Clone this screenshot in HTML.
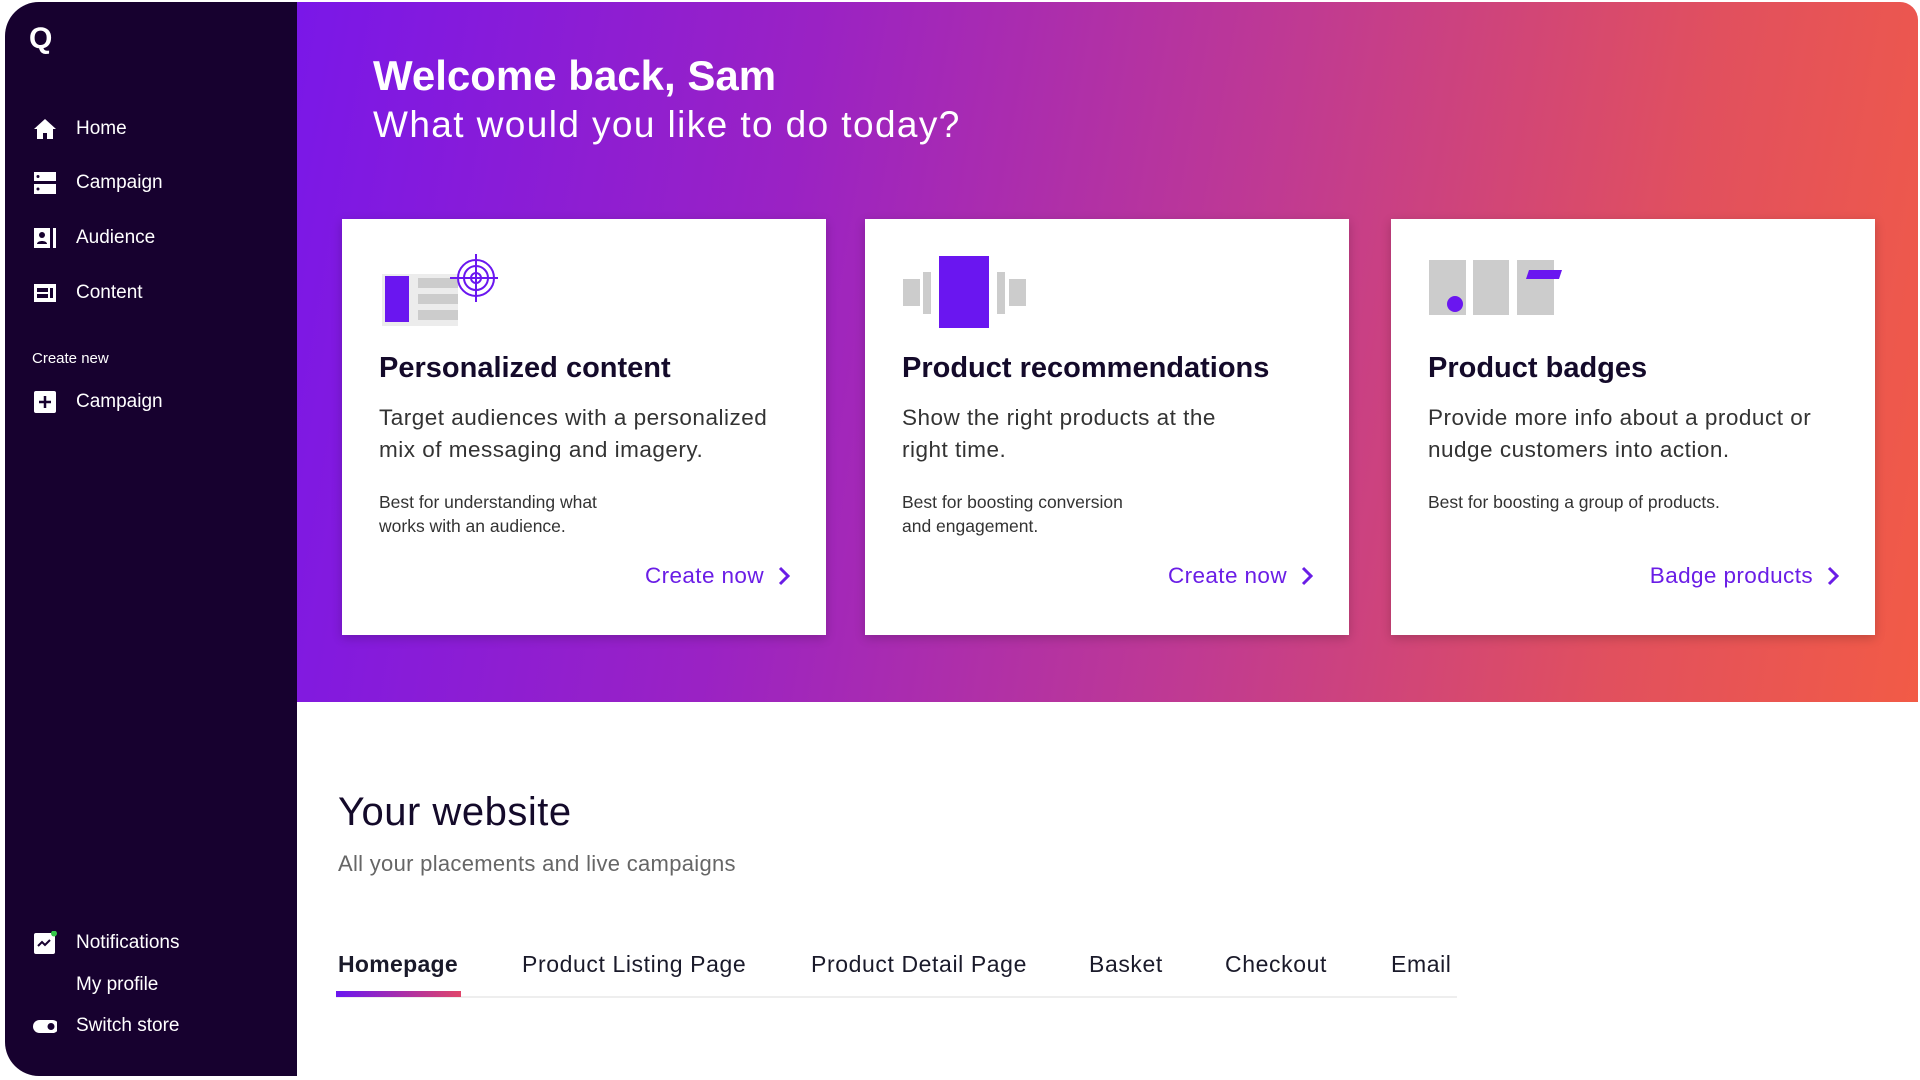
<!DOCTYPE html>
<html><head><meta charset="utf-8"><style>
*{margin:0;padding:0;box-sizing:border-box}
body{width:1920px;height:1080px;background:#fff;font-family:"Liberation Sans",sans-serif;position:relative;overflow:hidden}
.sb{position:absolute;left:5px;top:2px;width:292px;height:1074px;background:#17012f;border-radius:34px 0 0 34px}
.nav{position:absolute;left:0;color:#fff;font-size:19px;display:flex;align-items:center}
.nav .ic{position:absolute;left:28px;width:24px;height:24px;top:-12px}
.nav span{position:absolute;left:71px;top:-12px;white-space:nowrap;line-height:24px}
.hero{position:absolute;left:297px;top:2px;width:1621px;height:700px;background:linear-gradient(100deg,#7a17e8 0%,#9a22c4 30%,#c03a92 58%,#e1505e 82%,#f25b46 100%);border-radius:0 18px 0 0}
h1{position:absolute;left:373px;top:52px;color:#fff;font-size:42px;font-weight:bold}
.sub{position:absolute;left:373px;top:104px;color:#fff;font-size:37px;letter-spacing:1.4px}
.card{position:absolute;top:219px;width:484px;height:416px;background:#fff;box-shadow:0 3px 10px rgba(0,0,0,.2)}
.card h2{position:absolute;left:37px;top:133px;font-size:29px;color:#140a2a}
.card .d{position:absolute;left:37px;top:183px;font-size:22.5px;line-height:32px;color:#333;letter-spacing:.5px}
.card .s{position:absolute;left:37px;top:271px;font-size:17.5px;line-height:24px;color:#333}
.card .l{position:absolute;right:36px;top:344px;font-size:22.5px;color:#6a1de6;display:flex;align-items:center;gap:14px;letter-spacing:.4px}
.yw{position:absolute;left:338px;top:790px;font-size:40px;color:#140a2a;letter-spacing:.5px}
.yws{position:absolute;left:338px;top:851px;font-size:22px;color:#666;letter-spacing:.3px}
.tab{position:absolute;top:951px;font-size:23px;color:#1a1a2a;white-space:nowrap;letter-spacing:.6px}
</style></head><body>
<div class="sb">
 <div style="position:absolute;left:24px;top:20px;color:#fff;font-size:30px;font-weight:bold">Q</div>
 <div class="nav" style="top:127px"><svg class="ic" viewBox="0 0 24 24"><path d="M12 2L1 12h3v10h6v-6h4v6h6V12h3z" fill="#fff"/></svg><span>Home</span></div>
 <div class="nav" style="top:181px"><svg class="ic" viewBox="0 0 24 24"><rect x="1" y="1" width="22" height="9" fill="#fff"/><rect x="1" y="13" width="22" height="10" fill="#fff"/><circle cx="5" cy="5.5" r="1.5" fill="#17012f"/><circle cx="5" cy="18" r="1.5" fill="#17012f"/></svg><span>Campaign</span></div>
 <div class="nav" style="top:236px"><svg class="ic" viewBox="0 0 24 24"><rect x="1" y="2" width="16" height="20" fill="#fff"/><rect x="20" y="2" width="3" height="20" fill="#fff"/><circle cx="9" cy="9" r="3" fill="#17012f"/><path d="M4 18c0-4 10-4 10 0z" fill="#17012f"/></svg><span>Audience</span></div>
 <div class="nav" style="top:291px"><svg class="ic" viewBox="0 0 24 24"><rect x="1" y="3" width="22" height="18" fill="#fff"/><rect x="4" y="7" width="11" height="4" fill="#17012f"/><rect x="4" y="13" width="11" height="4" fill="#17012f"/><rect x="17" y="7" width="3" height="10" fill="#17012f"/></svg><span>Content</span></div>
 <div style="position:absolute;left:27px;top:348px;color:#fff;font-size:15px">Create new</div>
 <div class="nav" style="top:400px"><svg class="ic" viewBox="0 0 24 24"><rect x="1" y="1" width="22" height="22" rx="2" fill="#fff"/><path d="M12 6v12M6 12h12" stroke="#17012f" stroke-width="2.5"/></svg><span>Campaign</span></div>
 <div class="nav" style="top:941px"><svg class="ic" viewBox="0 0 24 24"><rect x="1" y="2" width="21" height="21" rx="2" fill="#fff"/><path d="M5 15l4-4 3 3 5-5" stroke="#17012f" stroke-width="2" fill="none"/><circle cx="21" cy="2.5" r="3" fill="#36c94a"/></svg><span>Notifications</span></div>
 <div class="nav" style="top:983px"><span>My profile</span></div>
 <div class="nav" style="top:1024px"><svg class="ic" viewBox="0 0 24 24"><rect x="0" y="6" width="26" height="13" rx="6.5" fill="#fff"/><circle cx="18" cy="12.5" r="3.5" fill="#17012f"/></svg><span>Switch store</span></div>
</div>
<div class="hero"></div>
<h1>Welcome back, Sam</h1>
<div class="sub">What would you like to do today?</div>

<div class="card" style="left:342px">
 <svg style="position:absolute;left:40px;top:33px" width="120" height="80" viewBox="0 0 120 80"><rect x="0" y="22" width="76" height="52" fill="#ececec"/><rect x="36" y="26" width="40" height="10" fill="#ccc"/><rect x="36" y="42" width="40" height="10" fill="#ccc"/><rect x="36" y="58" width="40" height="10" fill="#ccc"/><rect x="3" y="24" width="24" height="46" fill="#6a16f0"/><g stroke="#6a16f0" stroke-width="2" fill="none"><circle cx="94" cy="26" r="18" fill="#fff"/><circle cx="94" cy="26" r="12"/><circle cx="94" cy="26" r="5"/><path d="M94 2v48M68 26h48"/></g></svg>
 <h2>Personalized content</h2>
 <div class="d">Target audiences with a personalized<br>mix of messaging and imagery.</div>
 <div class="s">Best for understanding what<br>works with an audience.</div>
 <div class="l">Create now <svg width="12" height="20" viewBox="0 0 12 20"><path d="M2 2l8 8-8 8" stroke="#6a1de6" stroke-width="3" fill="none"/></svg></div>
</div>
<div class="card" style="left:865px">
 <svg style="position:absolute;left:38px;top:37px" width="130" height="75" viewBox="0 0 130 75"><rect x="0" y="23" width="17" height="27" fill="#ccc"/><rect x="20" y="16" width="8" height="42" fill="#ccc"/><rect x="36" y="0" width="50" height="72" fill="#6a16f0"/><rect x="94" y="16" width="8" height="42" fill="#ccc"/><rect x="106" y="23" width="17" height="27" fill="#ccc"/></svg>
 <h2>Product recommendations</h2>
 <div class="d">Show the right products at the<br>right time.</div>
 <div class="s">Best for boosting conversion<br>and engagement.</div>
 <div class="l">Create now <svg width="12" height="20" viewBox="0 0 12 20"><path d="M2 2l8 8-8 8" stroke="#6a1de6" stroke-width="3" fill="none"/></svg></div>
</div>
<div class="card" style="left:1391px">
 <svg style="position:absolute;left:38px;top:41px" width="140" height="60" viewBox="0 0 140 60"><rect x="0" y="0" width="37" height="55" fill="#ccc"/><rect x="44" y="0" width="36" height="55" fill="#ccc"/><rect x="88" y="0" width="37" height="55" fill="#ccc"/><circle cx="26" cy="44" r="8" fill="#6a16f0"/><path d="M100 10h33l-3 9h-33z" fill="#6a16f0"/></svg>
 <h2>Product badges</h2>
 <div class="d">Provide more info about a product or<br>nudge customers into action.</div>
 <div class="s">Best for boosting a group of products.</div>
 <div class="l">Badge products <svg width="12" height="20" viewBox="0 0 12 20"><path d="M2 2l8 8-8 8" stroke="#6a1de6" stroke-width="3" fill="none"/></svg></div>
</div>

<div class="yw">Your website</div>
<div class="yws">All your placements and live campaigns</div>
<div style="position:absolute;left:336px;top:996px;width:1121px;height:2px;background:#eee"></div>
<div style="position:absolute;left:336px;top:991px;width:125px;height:6px;background:linear-gradient(90deg,#6a16f0,#e0456a)"></div>
<div class="tab" style="left:338px;font-weight:bold;letter-spacing:.3px">Homepage</div>
<div class="tab" style="left:522px">Product Listing Page</div>
<div class="tab" style="left:811px">Product Detail Page</div>
<div class="tab" style="left:1089px">Basket</div>
<div class="tab" style="left:1225px">Checkout</div>
<div class="tab" style="left:1391px">Email</div>
</body></html>
